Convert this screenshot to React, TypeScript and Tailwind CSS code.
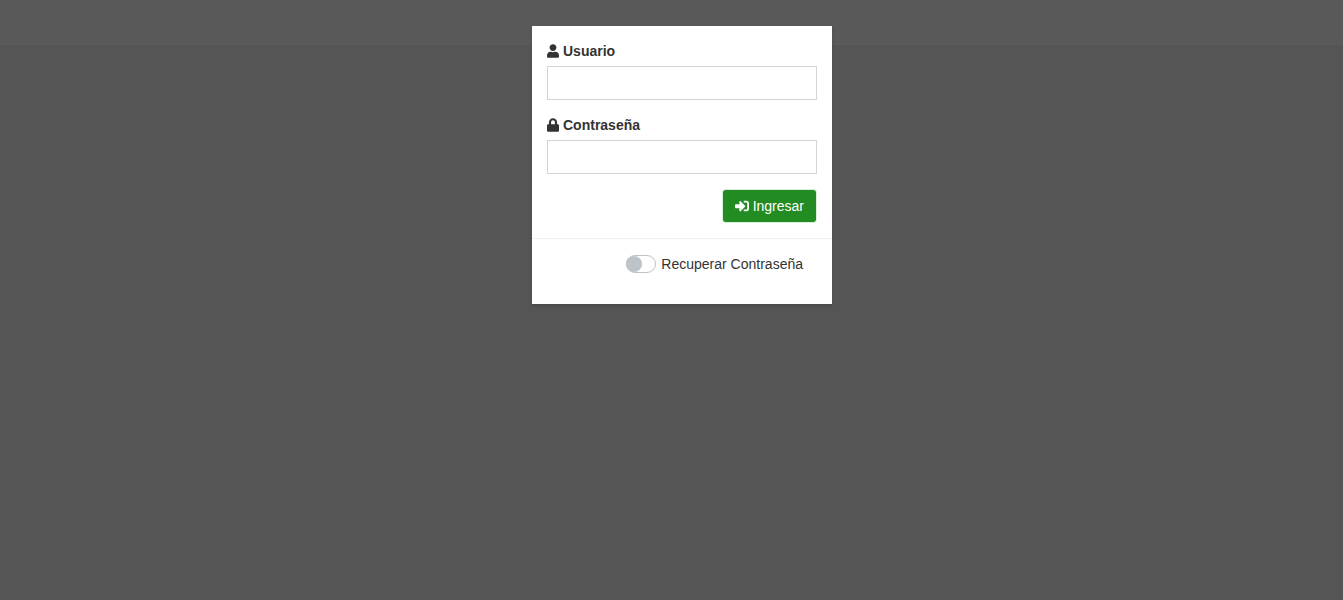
import React, { useState } from 'react';
import { FaLock, FaSignInAlt, FaUser } from 'react-icons/fa';

const fields = [
  { id: 'usuario', label: 'Usuario', type: 'text', icon: FaUser },
  { id: 'contrasena', label: 'Contraseña', type: 'password', icon: FaLock },
];

function App() {
  const [recover, setRecover] = useState(false);

  return (
    <div className="grid min-h-screen grid-rows-[45px_1fr] bg-[#555555] font-['Liberation_Sans',Arial,sans-serif] text-sm text-[#333333]">
      {/* Dimmed top bar */}
      <header className="col-start-1 row-start-1 border-b border-[#5b5b5b] bg-[#595959]" />

      {/* Login dialog */}
      <main className="z-10 col-start-1 row-span-2 row-start-1 flex items-start justify-center pt-[26px] pl-[21px]">
        <div role="dialog" aria-label="Ingresar" className="w-[300px] bg-white shadow-[0_2px_3px_rgba(0,0,0,0.15)]">
          <form onSubmit={(e) => e.preventDefault()} className="flex flex-col gap-[15px] border-b border-[#f0f0f0] p-[15px]">
            {fields.map(({ id, label, type, icon: Icon }) => (
              <div key={id}>
                <label htmlFor={id} className="mb-[5px] flex items-center gap-1 leading-5 font-bold">
                  <Icon className="h-[14px] w-3" />
                  {label}
                </label>
                <input
                  id={id}
                  type={type}
                  className="block h-[34px] w-full border border-[#d3d5d7] px-3 outline-none focus:border-[#3c8dbc]"
                />
              </div>
            ))}
            <button
              type="submit"
              className="flex h-[34px] cursor-pointer items-center gap-1 self-end rounded-[3px] border border-[#dceedc] bg-[#228b22] bg-clip-padding px-3 text-white hover:bg-[#1d771d]"
            >
              <FaSignInAlt className="size-[14px]" />
              Ingresar
            </button>
          </form>

          <div className="flex justify-end pt-[15px] pr-[29px] pb-[30px]">
            <label className="flex cursor-pointer items-center gap-[5px] leading-5">
              <input
                type="checkbox"
                role="switch"
                checked={recover}
                onChange={(e) => setRecover(e.target.checked)}
                className="h-[18px] w-[30px] appearance-none rounded-full border border-[#bdc3c8] bg-white before:-ml-px before:block before:size-4 before:rounded-full before:bg-[#bdc3c8] checked:before:ml-3 checked:before:bg-[#228b22]"
              />
              Recuperar Contraseña
            </label>
          </div>
        </div>
      </main>
    </div>
  );
}

export default App;
